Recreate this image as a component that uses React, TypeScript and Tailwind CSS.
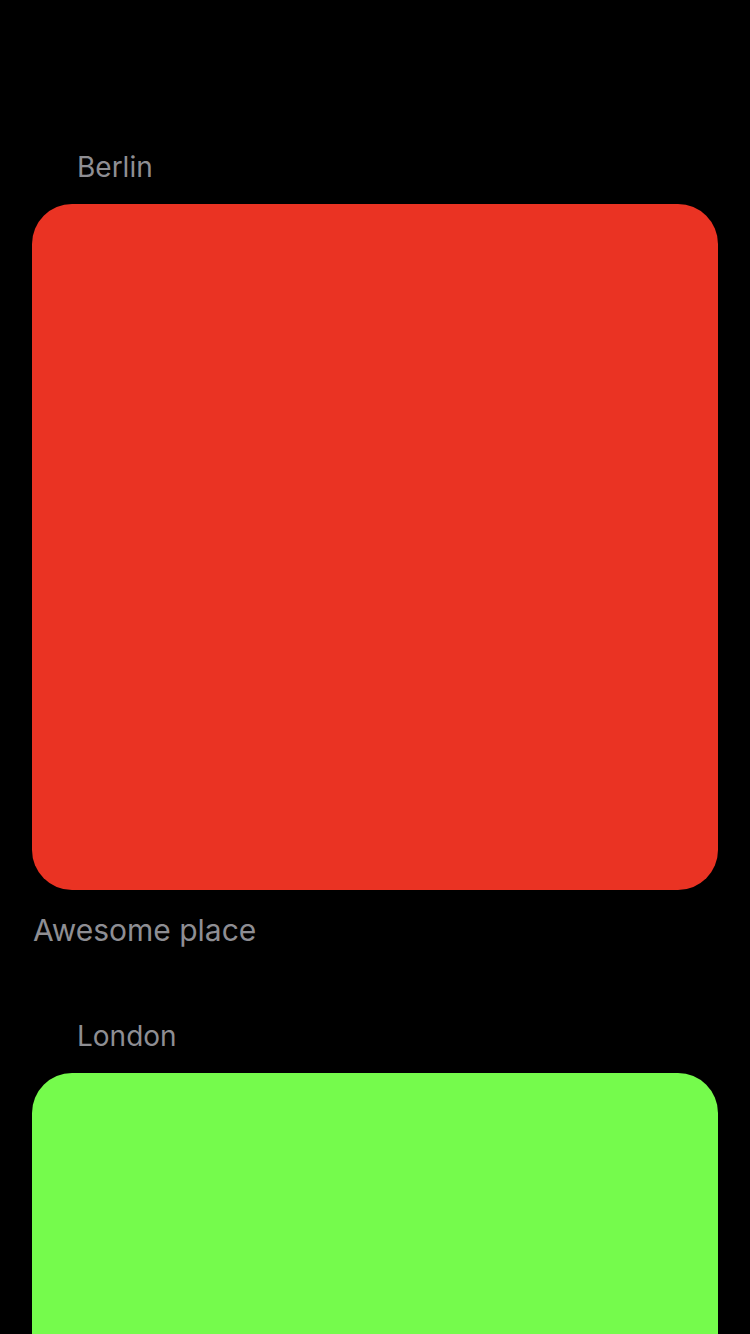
import React from "react";

const font = { fontFamily: "Inter, 'Noto Sans', 'Liberation Sans', sans-serif" };

function Section({ title, color, footer }: { title: string; color: string; footer?: string }) {
  return (
    <div className="flex flex-col shrink-0">
      <div className="pl-[77px] text-[28px] leading-[32px] text-[#8e8e93]">{title}</div>
      <div className={`shrink-0 mx-[32px] mt-[21px] h-[686px] rounded-[40px] ${color}`} />
      {footer ? (
        <div className="pl-[33px] mt-[22px] text-[30px] leading-[36px] text-[#8e8e93]">{footer}</div>
      ) : null}
    </div>
  );
}

export default function App() {
  return (
    <div className="w-[750px] h-[1334px] overflow-hidden bg-black flex flex-col pt-[151px]" style={font}>
      <Section title="Berlin" color="bg-[#ea3323]" footer="Awesome place" />
      <div className="h-[72px] shrink-0" />
      <Section title="London" color="bg-[#75fb4c]" />
    </div>
  );
}
